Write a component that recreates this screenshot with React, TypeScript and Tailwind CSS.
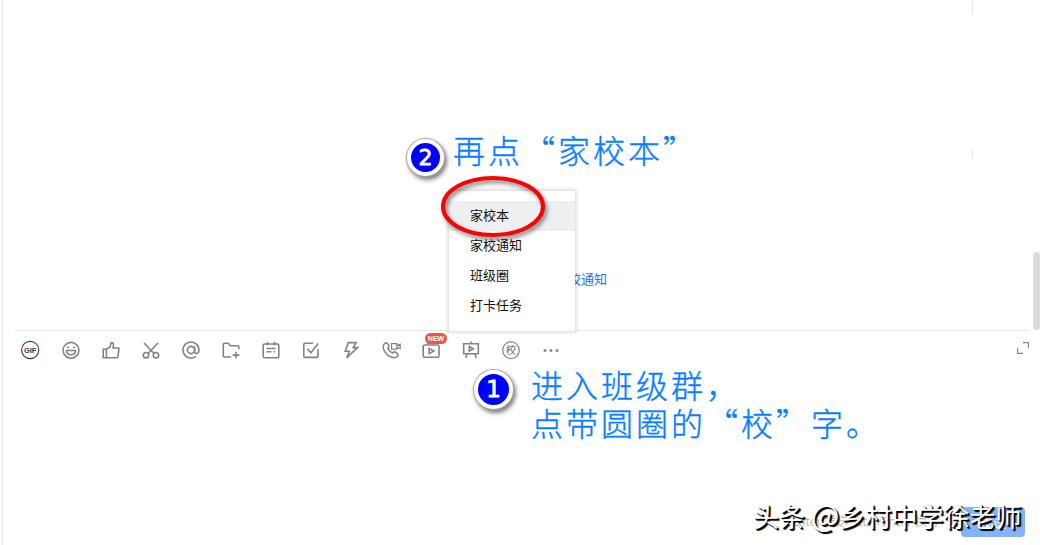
import type { ReactNode } from 'react';

const menuItems = ['家校本', '家校通知', '班级圈', '打卡任务'];

function Icon({ children }: { children: ReactNode }) {
    return (
        <svg className="block h-5 w-5" viewBox="0 0 20 20" fill="none" stroke="#818385" strokeWidth="1.6">
            {children}
        </svg>
    );
}

const tools = [
    <Icon key="gif">
        <circle cx="9.2" cy="10" r="8.6" stroke="#363d49" strokeWidth="1.1" />
        <text x="9.2" y="12.6" textAnchor="middle" textLength="12.5" lengthAdjust="spacingAndGlyphs" fontSize="7" fontWeight="700" fontFamily="Liberation Sans, sans-serif" fill="#363d49" stroke="none">GIF</text>
    </Icon>,
    <Icon key="smile">
        <circle cx="10" cy="10.3" r="7.9" />
        <path d="M5.5 10.5h9c0 2.8-2 4.2-4.5 4.2s-4.5-1.4-4.5-4.2ZM6 7.5h2M12 7.5h2" />
    </Icon>,
    <Icon key="like">
        <path d="M2.2 9.2h3.2v8.6H2.2ZM5.4 9.2 9 7l1-4.2c1.8-.6 2.8.6 2.5 2.4L12 8h5.2c.6 0 .9.4.8.9l-1.2 8c-.1.5-.5.9-1 .9H5.4" />
    </Icon>,
    <Icon key="cut">
        <path d="m3 3 10 10.5M17 3 7 13.5" />
        <circle cx="5" cy="15.2" r="2.7" />
        <circle cx="15" cy="15.2" r="2.7" />
    </Icon>,
    <Icon key="at">
        <circle cx="10" cy="10" r="3.6" />
        <path d="M13.6 6.3v5.2c0 3 4.3 2.9 4.3-1.5a8 8 0 1 0-3.1 6.3" />
    </Icon>,
    <Icon key="folder">
        <path d="M10 17H3.3c-.6 0-1-.4-1-1V4.3c0-.6.4-1 1-1h4l2 2.4h7.5c.6 0 1 .4 1 1v2.6M15 11.8v6.6M11.6 15.1h6.8" />
    </Icon>,
    <Icon key="note">
        <rect x="2.2" y="4" width="15.6" height="13.7" rx="1.5" />
        <path d="M6.5 1.8v3.4M13.5 1.8v3.4M5.5 8.5h9M5.5 11.7h5M12.5 11.7h1.5" />
    </Icon>,
    <Icon key="task">
        <path d="M12 3.2H4c-.7 0-1.2.5-1.2 1.2v11.8c0 .7.5 1.2 1.2 1.2h11.8c.7 0 1.2-.5 1.2-1.2V9M6.2 8.7l3.7 4 7.3-9.3" />
    </Icon>,
    <Icon key="flash">
        <path d="M7.4 2.6h7.8l-3 5h4.4L5.7 17.8l2.7-6.6H4.2Z" />
    </Icon>,
    <Icon key="call">
        <path d="M3.4 3.8c1-1.3 2.2-1.4 3.1-.2l1.2 1.8c.6.9.2 1.7-.8 2.5.7 2.5 2.5 4.3 4.9 5 .9-1.2 1.8-1.5 2.7-.8l1.9 1.5c.9.8.8 1.8-.3 2.9-2.8 2.6-7.8.4-10.5-2.5C2.4 10.7 1 6.5 3.4 3.8Z" />
        <path d="M10.5 3.6h5.3v5.5h-5.3ZM15.8 5.6l3.4-1.5v4.5l-3.4-1.4" strokeWidth="1.2" />
    </Icon>,
    <Icon key="live">
        <rect x="2.2" y="5" width="15.8" height="12.3" rx="1.3" />
        <path d="m8.2 8.5 4.6 2.6-4.6 2.6ZM6 2l2 2.8M14 2l-2 2.8" />
    </Icon>,
    <Icon key="board">
        <path d="M2.7 3.7h14.6v10H2.7ZM1.8 3.7h16.4M10 1.5v2M6.2 13.7l-1.5 4.2M13.8 13.7l1.5 4.2" />
        <path d="m8.3 6.5 4 2.3-4 2.3Z" />
    </Icon>,
    <Icon key="school">
        <circle cx="10" cy="10.2" r="8.3" strokeWidth="1.2" />
        <text x="10" y="14" textAnchor="middle" fontSize="10.5" fontFamily="Noto Sans CJK SC, sans-serif" fill="#6c6e70" stroke="none">校</text>
    </Icon>,
    <Icon key="more">
        <path d="M2.7 10.5h2.6M8.7 10.5h2.6M14.7 10.5h2.6" strokeWidth="2.5" />
    </Icon>,
];

function Toolbar() {
    return (
        <div className="mr-[11px] ml-3 flex h-10 items-center border-t border-[#e8e9ea] pb-0.5 pl-1.5">
            <div className="flex flex-1 gap-5">
                {tools.map((tool, i) => (
                    <div key={i} className="relative h-5 w-5">
                        {tool}
                        {i === 10 && (
                            <span className="absolute top-[-7px] left-[4px] flex h-[11px] w-[22px] items-center justify-center rounded-full bg-[#f25643] font-['Liberation_Sans',sans-serif] text-[7px] leading-none font-bold text-white">
                                NEW
                            </span>
                        )}
                    </div>
                ))}
            </div>
            <svg className="mb-1 h-3 w-3" viewBox="0 0 12 12" fill="none" stroke="#85878b" strokeWidth="1.2">
                <path d="M6 .7h5.4V6M.6 6v5.4H6" />
            </svg>
        </div>
    );
}

function Menu() {
    return (
        <ul className="absolute top-[191px] left-[449px] h-[140px] w-[126px] bg-white pt-2.5 text-[13px] text-[#111] shadow-[0_0_3px_2px_rgba(0,0,0,0.12)]">
            {menuItems.map((item, i) => (
                <li key={item} className={i === 0 ? 'h-[30px] bg-[#eeeff1] pl-[21px] leading-[28px]' : 'h-[30px] pl-[21px] leading-[28px]'}>
                    {item}
                </li>
            ))}
        </ul>
    );
}

function Step({ n, className }: { n: number; className: string }) {
    return (
        <div className={`absolute flex items-center justify-center rounded-full border-4 border-white bg-[#0000ff] font-['DejaVu_Sans',sans-serif] text-white shadow-[0_0_1px_1px_#aaa,2px_3px_4px_1px_rgba(0,0,0,0.5)] [-webkit-text-stroke:0.8px_white] ${className}`}>
            {n}
        </div>
    );
}

export default function App() {
    return (
        <div className="relative flex h-[545px] w-[1040px] flex-col overflow-hidden bg-white pl-[2px] font-['Noto_Sans_CJK_SC',sans-serif]">
            <div className="flex h-[545px] flex-col border-l border-[#e9e9e9]">
                <div className="flex h-[330px] shrink-0 justify-end">
                    <div className="flex w-[68px] flex-col">
                        <div className="h-3.5 w-px bg-[#e6e6e6]" />
                        <div className="mt-[136px] h-2 w-px bg-[#e6e6e6]" />
                        <div className="mt-[94px] mr-0 ml-auto h-[78px] w-[7px] rounded-full bg-[#dadada]" />
                    </div>
                </div>
                <Toolbar />
                <div className="flex flex-1 items-end justify-end gap-[22px] pr-[15px] pb-2">
                    <span className="font-['Noto_Sans','Noto_Sans_CJK_SC',sans-serif] text-[12px] leading-[30px] whitespace-nowrap text-[#b8babd]">Enter 发送, Ctrl+Enter 换行</span>
                    <button className="h-[30px] w-16 rounded bg-[#84b4ff] text-[13px] text-white">发送</button>
                </div>
            </div>

            <span className="absolute top-[269px] left-[568px] text-[13px] leading-5 text-[#1677ff]">校通知</span>
            <Menu />
            <svg className="absolute top-[168px] left-[432px] h-[82px] w-[124px] drop-shadow-[2px_3px_2px_rgba(0,0,0,0.5)]" viewBox="0 0 124 82" fill="none">
                <ellipse cx="61" cy="38.5" rx="50" ry="28.5" stroke="#fb0000" strokeWidth="4" />
            </svg>

            <Step n={2} className="top-[139px] left-[407px] h-[37px] w-[37px] text-[22px]" />
            <Step n={1} className="top-[370px] left-[474px] h-[39px] w-[39px] text-[23px]" />
            <p className="absolute top-[130px] left-[453px] text-[32px] leading-[38px] font-light tracking-[3px] whitespace-nowrap text-[#087eff] [-webkit-text-stroke:0.4px_#087eff]">再点“家校本”</p>
            <p className="absolute top-[365px] left-[531px] text-[32px] leading-[38px] font-light tracking-[3px] whitespace-nowrap text-[#087eff] [-webkit-text-stroke:0.4px_#087eff]">
                进入班级群，
                <br />
                点带圆圈的“校”字。
            </p>

            <div className="absolute top-[494px] left-[753px] flex items-baseline gap-1.5 text-[26px] leading-[40px] whitespace-nowrap text-white [text-shadow:1px_1px_0_#000,2px_2px_1px_#000]">
                <span>头条</span>
                <span>
                    <span className="text-[30px]">@</span>
                    乡村中学徐老师
                </span>
            </div>
        </div>
    );
}
